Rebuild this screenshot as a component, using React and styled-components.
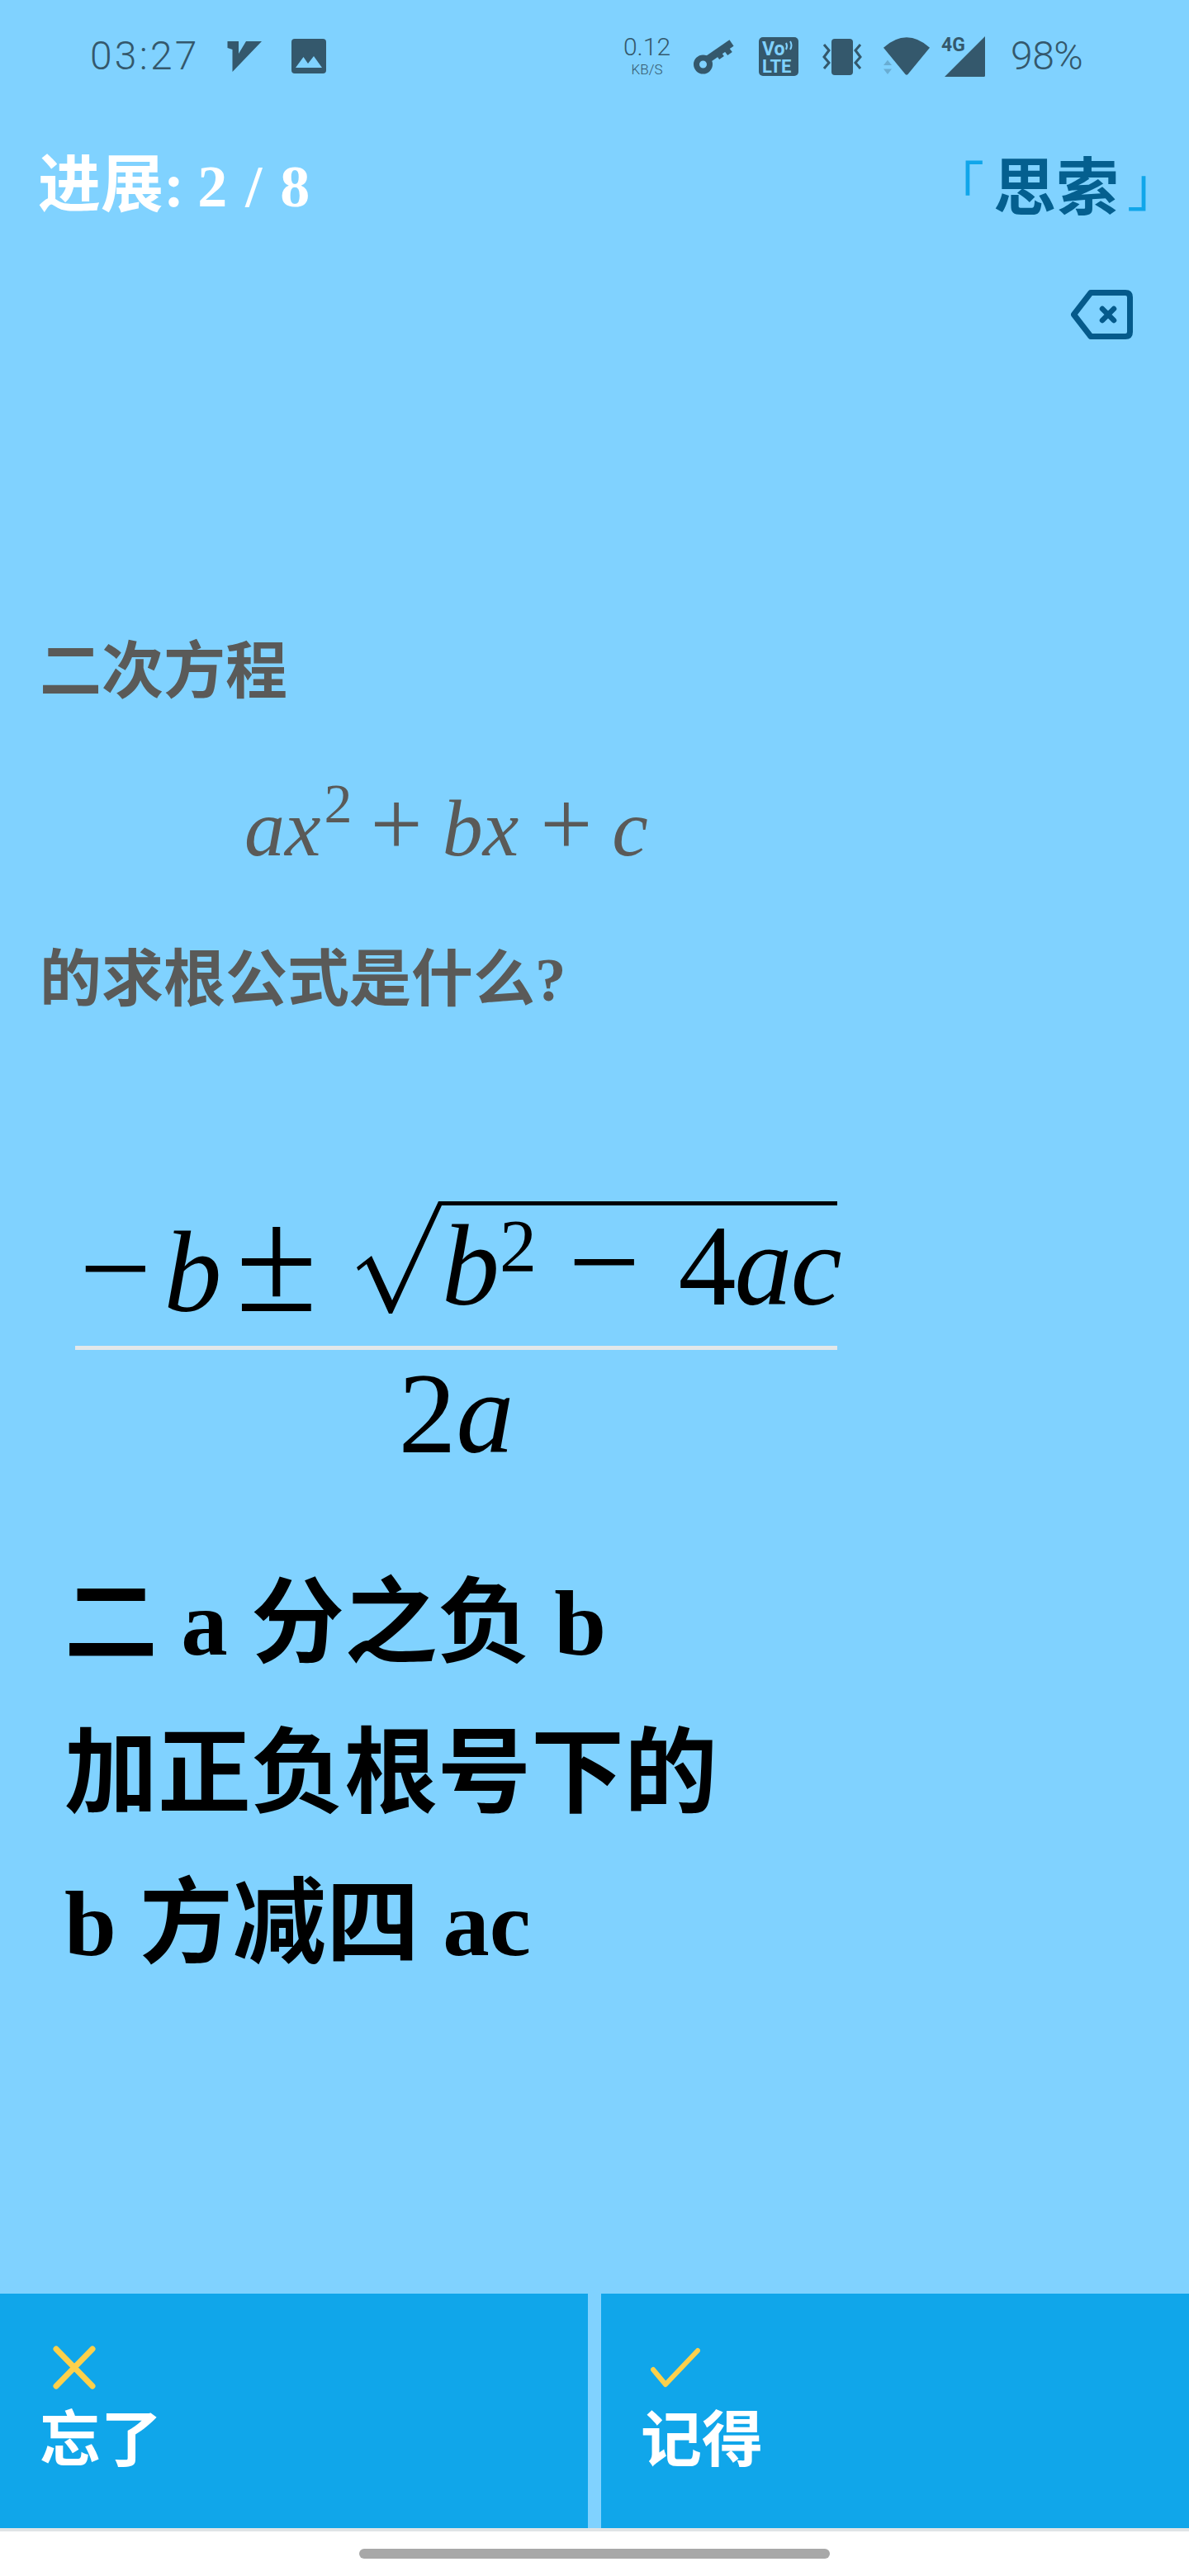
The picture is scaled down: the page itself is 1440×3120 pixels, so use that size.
import React from "react";
import styled, { createGlobalStyle } from "styled-components";

const GlobalStyle = createGlobalStyle`
  html, body {
    margin: 0;
    padding: 0;
    background: #80d2ff;
  }
`;

const SERIF = `"Liberation Serif", "Noto Sans CJK SC", serif`;
const SANS = `Roboto, "Noto Sans CJK SC", sans-serif`;
const STATUS = "#34586c";
const BG = "#80d2ff";

const Page = styled.div`
  width: 1440px;
  height: 3120px;
  display: flex;
  flex-direction: column;
  overflow: hidden;
  background: ${BG};
  font-family: ${SERIF};
`;

const StatusBar = styled.div`
  height: 136px;
  flex: none;
  display: flex;
  align-items: center;
  justify-content: space-between;
  padding: 0 133px 0 109px;
  color: ${STATUS};
  font-family: ${SANS};
  font-weight: 300;
`;

const StatusGroup = styled.div`
  display: flex;
  align-items: center;
`;

const Clock = styled.div`
  width: ${({ $w }) => $w}px;
  margin-left: ${({ $ml }) => $ml || 0}px;
  font-size: 48px;
  line-height: 48px;
  letter-spacing: ${({ $ls }) => $ls}px;
  white-space: nowrap;
`;

const NetSpeed = styled.div`
  width: 53px;
  display: flex;
  flex-direction: column;
  align-items: center;
`;

const NetValue = styled.span`
  font-size: 30px;
  line-height: 30px;
`;

const NetUnit = styled.span`
  font-size: 17px;
  line-height: 20px;
  margin-top: 2px;
`;

const StatusSvg = styled.svg`
  display: block;
  flex: none;
  overflow: visible;
  margin-left: ${({ $ml }) => $ml || 0}px;
`;

const ProgressRow = styled.div`
  height: 172px;
  flex: none;
  display: flex;
  align-items: center;
  justify-content: space-between;
  padding: 0 11px 0 46px;
`;

const Progress = styled.div`
  margin-top: 6px;
  font-size: 76px;
  font-weight: 700;
  line-height: 90px;
  color: #fff;
  white-space: nowrap;
`;

const ProgressCount = styled.span`
  margin-left: -6px;
  font-size: 72px;
  word-spacing: 4px;
`;

const Phase = styled.div`
  display: flex;
  align-items: center;
  margin-top: 12px;
  font-size: 76px;
  font-weight: 700;
  line-height: 90px;
  color: #045f8f;
  white-space: nowrap;
`;

const Bracket = styled.span`
  color: #10a6ea;
  font-size: 64px;
  font-weight: 400;
  margin: 0 ${({ $mr }) => $mr || 0}px 0 ${({ $ml }) => $ml || 0}px;
`;

const ActionRow = styled.div`
  display: flex;
  justify-content: flex-end;
  padding: 43px 68px 0 0;
`;

const Question = styled.div`
  padding-left: 48px;
  color: #5a5a58;
  font-weight: 700;
  font-size: 75px;
  line-height: 100px;
`;

const QuestionLine = styled.div`
  margin-top: ${({ $mt }) => $mt || 0}px;
`;

const InlineFormula = styled.div`
  height: 176px;
  padding: 46px 0 51px 296px;
  margin-left: -48px;
  font-weight: 400;
  font-style: italic;
  font-size: 98px;
  line-height: 176px;
  white-space: nowrap;
`;

const Sym = styled.span`
  font-style: ${({ $upright }) => ($upright ? "normal" : "italic")};
  font-size: ${({ $size }) => ($size ? `${$size}px` : "inherit")};
  margin-left: ${({ $ml }) => $ml || 0}px;
`;

const Sup = styled.span`
  font-style: normal;
  font-size: ${({ $size }) => $size}px;
  line-height: 0;
  vertical-align: ${({ $rise }) => $rise}px;
  margin-left: ${({ $ml }) => $ml || 0}px;
`;

const Fraction = styled.div`
  width: 923px;
  margin: 218px 0 0 91px;
  color: #000;
  font-size: 140px;
`;

const Numerator = styled.div`
  height: 175px;
  display: flex;
  align-items: flex-start;
  padding-left: 5px;
`;

const MathText = styled.div`
  width: 336px;
  flex: none;
  padding-top: 5px;
  line-height: 136px;
  white-space: nowrap;
`;

const Radicand = styled.div`
  flex: 1;
  min-width: 0;
  border-top: 5px solid #000;
  line-height: 136px;
  white-space: nowrap;
`;

const FractionBar = styled.div`
  height: 5px;
  background: #e2e8ea;
`;

const Denominator = styled.div`
  margin-top: 9px;
  text-align: center;
  line-height: 136px;
`;

const Answer = styled.div`
  margin-top: 95px;
  padding-left: 78px;
  color: #000;
  font-weight: 700;
  font-size: 113px;
  line-height: 182px;
`;

const ButtonRow = styled.div`
  margin-top: auto;
  height: 284px;
  flex: none;
  display: flex;
  gap: 16px;
`;

const GradeButton = styled.div`
  flex: 1;
  background: #10a6ea;
  padding: 60px 0 0 48px;
`;

const GradeIcon = styled.svg`
  display: block;
  margin-left: 12px;
`;

const GradeLabel = styled.div`
  margin-top: 18px;
  font-family: ${SANS};
  font-size: 74px;
  font-weight: 700;
  line-height: 80px;
  color: #fff;
`;

const NavBar = styled.div`
  height: 54px;
  flex: none;
  border-top: 4px solid #e0e4e6;
  background: #fff;
  display: flex;
  align-items: center;
  justify-content: center;
`;

const NavPill = styled.div`
  width: 570px;
  height: 12px;
  border-radius: 6px;
  background: #a8a8a8;
`;

const VpnIcon = () => (
  <StatusSvg $ml={38} width="42" height="37" viewBox="0 0 42 37" fill={STATUS}>
    <path d="M0.5 0H14V15L23 0H42L6.5 37V10L0.5 8Z" />
  </StatusSvg>
);

const ImageIcon = () => (
  <StatusSvg $ml={36} width="42" height="42" viewBox="0 0 42 42">
    <rect width="42" height="42" rx="4" fill={STATUS} />
    <path d="M5 35L14.5 22L20 30L27 21L37 35Z" fill={BG} />
  </StatusSvg>
);

const KeyIcon = () => (
  <StatusSvg $ml={30} width="51" height="43" viewBox="0 0 51 43" fill="none" stroke={STATUS}>
    <circle cx="11.5" cy="31" r="8" strokeWidth="7" />
    <path d="M17 25L46 5" strokeWidth="9" />
    <path d="M38 10L44 18M29 16L34 23" strokeWidth="7" />
  </StatusSvg>
);

const VolteIcon = () => (
  <StatusSvg $ml={28} width="48" height="47" viewBox="0 0 48 47">
    <rect width="48" height="47" rx="5" fill={STATUS} />
    <text x="4" y="22" fontFamily="Roboto, sans-serif" fontWeight="700" fontSize="23" fill={BG}>
      Vo
    </text>
    <path d="M33 7Q35 11 33 15M38 5Q41 10 38 15" fill="none" stroke={BG} strokeWidth="2" />
    <text x="4" y="43" fontFamily="Roboto, sans-serif" fontWeight="700" fontSize="22" fill={BG}>
      LTE
    </text>
  </StatusSvg>
);

const VibrateIcon = () => (
  <StatusSvg $ml={30} width="46" height="45" viewBox="0 0 46 45">
    <rect x="10" y="1" width="26" height="44" rx="4" fill={STATUS} />
    <path
      d="M1 8L7 15L1 23L7 30L1 37M45 8L39 15L45 23L39 30L45 37"
      fill="none"
      stroke={STATUS}
      strokeWidth="3"
    />
  </StatusSvg>
);

const WifiIcon = () => (
  <StatusSvg $ml={27} width="56" height="46" viewBox="0 0 56 46">
    <path d="M0 12.7Q28 -12 56 12.7L29.5 45Q28 46.5 26.5 45Z" fill={STATUS} />
    <path d="M5 27.7L10 34H0ZM0 38.5H10L5 45Z" fill={STATUS} opacity="0.3" />
  </StatusSvg>
);

const SignalIcon = () => (
  <StatusSvg $ml={14} width="55" height="49" viewBox="0 0 55 49">
    <path d="M53 0V47.5Q53 49 51.5 49H4Z" fill={STATUS} />
    <text x="0" y="18" fontFamily="Roboto, sans-serif" fontWeight="700" fontSize="23" fill={STATUS}>
      4G
    </text>
  </StatusSvg>
);

const BackspaceIcon = () => (
  <svg width="75" height="60" viewBox="0 0 75 60" fill="none" stroke="#055a8b" strokeLinejoin="round" strokeLinecap="round">
    <path d="M24 3.5H66Q71.5 3.5 71.5 9V51Q71.5 56.5 66 56.5H24L3.5 30Z" strokeWidth="7" />
    <path d="M38 23L52 37M52 23L38 37" strokeWidth="6.5" />
  </svg>
);

const RadicalSign = () => (
  <StatusSvg width="103" height="137" viewBox="0 0 103 137" fill="#000">
    <path d="M0 80L18 66L43 120L99 0H103V5L43 136H39L12 76L2 84Z" />
  </StatusSvg>
);

const CrossIcon = () => (
  <GradeIcon width="60" height="60" viewBox="0 0 60 60" fill="none" stroke="#fdd04b" strokeWidth="7" strokeLinecap="round">
    <path d="M8 7L52 52M52 7L8 52" />
  </GradeIcon>
);

const CheckIcon = () => (
  <GradeIcon width="60" height="60" viewBox="0 0 60 60" fill="none" stroke="#fdd04b" strokeWidth="6" strokeLinecap="round" strokeLinejoin="round">
    <path d="M3 32L18 50L57 9" />
  </GradeIcon>
);

export default function App() {
  return (
    <Page>
      <GlobalStyle />
      <StatusBar>
        <StatusGroup>
          <Clock $w={128} $ls={3.2}>03:27</Clock>
          <VpnIcon />
          <ImageIcon />
        </StatusGroup>
        <StatusGroup>
          <NetSpeed>
            <NetValue>0.12</NetValue>
            <NetUnit>KB/S</NetUnit>
          </NetSpeed>
          <KeyIcon />
          <VolteIcon />
          <VibrateIcon />
          <WifiIcon />
          <SignalIcon />
          <Clock $w={83} $ml={29} $ls={-0.5}>98%</Clock>
        </StatusGroup>
      </StatusBar>

      <ProgressRow>
        <Progress>
          进展:<ProgressCount> 2 / 8</ProgressCount>
        </Progress>
        <Phase>
          <Bracket $mr={11}>「</Bracket>
          思索
          <Bracket $ml={10}>」</Bracket>
        </Phase>
      </ProgressRow>

      <ActionRow>
        <BackspaceIcon />
      </ActionRow>

      <Question>
        <QuestionLine $mt={353}>二次方程</QuestionLine>
        <InlineFormula>
          <Sym>a</Sym>
          <Sym>x</Sym>
          <Sup $size={68} $rise={40} $ml={4}>2</Sup>
          <Sym $upright $size={112} $ml={22}>+</Sym>
          <Sym $ml={24}>b</Sym>
          <Sym>x</Sym>
          <Sym $upright $size={112} $ml={26}>+</Sym>
          <Sym $ml={24}>c</Sym>
        </InlineFormula>
        <QuestionLine>的求根公式是什么?</QuestionLine>
      </Question>

      <Fraction>
        <Numerator>
          <MathText>
            <Sym $upright $size={155}>−</Sym>
            <Sym $ml={15}>b</Sym>
            <Sym $upright $size={180} $ml={17}>±</Sym>
          </MathText>
          <RadicalSign />
          <Radicand>
            <Sym>b</Sym>
            <Sup $size={90} $rise={40}>2</Sup>
            <Sym $upright $size={155} $ml={38}>−</Sym>
            <Sym $upright $ml={46}>4</Sym>
            <Sym $ml={-2}>a</Sym>
            <Sym $ml={-2}>c</Sym>
          </Radicand>
        </Numerator>
        <FractionBar />
        <Denominator>
          <Sym $upright>2</Sym>
          <Sym>a</Sym>
        </Denominator>
      </Fraction>

      <Answer>
        <div>二 a 分之负 b</div>
        <div>加正负根号下的</div>
        <div>b 方减四 ac</div>
      </Answer>

      <ButtonRow>
        <GradeButton>
          <CrossIcon />
          <GradeLabel>忘了</GradeLabel>
        </GradeButton>
        <GradeButton>
          <CheckIcon />
          <GradeLabel>记得</GradeLabel>
        </GradeButton>
      </ButtonRow>
      <NavBar>
        <NavPill />
      </NavBar>
    </Page>
  );
}
